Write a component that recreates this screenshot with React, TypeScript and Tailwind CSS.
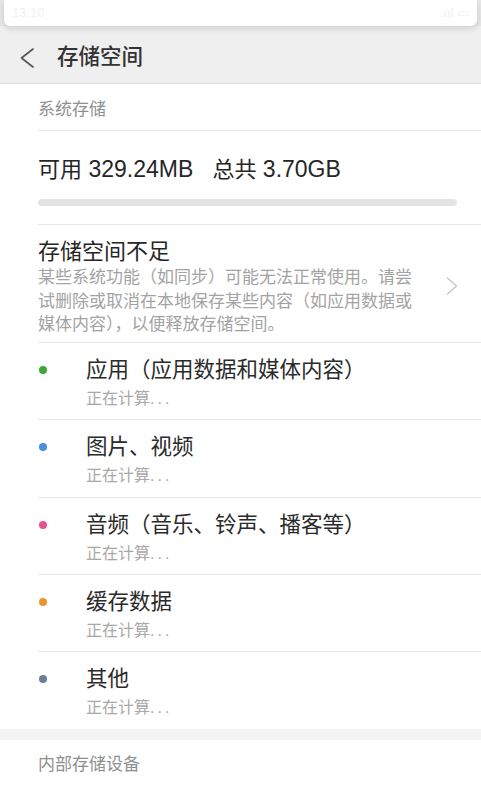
type Category = {
    name: string;
    color: string;
};

// 分类列表
const categories: Category[] = [
    { name: "应用（应用数据和媒体内容）", color: "bg-[#3aa935]" },
    { name: "图片、视频", color: "bg-[#4a8ee0]" },
    { name: "音频（音乐、铃声、播客等）", color: "bg-[#e4528f]" },
    { name: "缓存数据", color: "bg-[#f0932b]" },
    { name: "其他", color: "bg-[#6d7e98]" },
];

const font = {
    fontFamily: '"Liberation Sans", "Noto Sans CJK SC", sans-serif',
};

export default function App() {
    return (
        <div className="w-[481px] h-[785px] overflow-hidden bg-white" style={font}>
            {/* 顶部通知卡片 + 标题栏 */}
            <div className="bg-[#efefef] border-b border-[#dedede]">
                <div className="px-[4px] bg-[#e6e6e6]">
                    <div className="h-[26px] bg-white rounded-b-[6px] shadow-[0_3px_6px_rgba(0,0,0,0.12)] flex items-center justify-between px-[8px]">
                        <span className="text-[13px] text-[#f1f1f1]">13:10</span>
                        <span className="text-[13px] text-[#f1f1f1]">.ııl ▭</span>
                    </div>
                </div>
                <div className="h-[57px] flex items-center pt-[7px]">
                    <svg
                        className="ml-[20px]"
                        width="14"
                        height="20"
                        viewBox="0 0 14 20"
                        fill="none"
                    >
                        <polyline
                            points="13,1 1.5,10 13,19"
                            stroke="#555"
                            strokeWidth="1.6"
                            strokeLinejoin="round"
                            strokeLinecap="round"
                        />
                    </svg>
                    <h1 className="ml-[23px] text-[21.5px] leading-none text-[#333] font-medium">
                        存储空间
                    </h1>
                </div>
            </div>

            {/* 系统存储 */}
            <div className="h-[46px] flex items-center pt-[5px] pl-[38px] text-[17px] text-[#8f8f8f]">
                系统存储
            </div>

            <div className="ml-[38px] border-t border-[#e6e6e6] h-[94px]">
                <div className="pt-[23px] pr-[24px]">
                    <p className="leading-[30px] text-[#262626] whitespace-pre">
                        <span className="text-[22px]">可用</span>
                        <span className="text-[23px]"> 329.24MB   </span>
                        <span className="text-[22px]">总共</span>
                        <span className="text-[23px]"> 3.70GB</span>
                    </p>
                    <div className="mt-[12px] h-[7px] rounded-full bg-[#e4e4e4]"></div>
                </div>
            </div>

            {/* 存储空间不足 */}
            <div className="ml-[38px] border-t border-[#e6e6e6] flex h-[118px]">
                <div className="flex-1 pt-[13px]">
                    <p className="text-[22px] leading-[28px] text-[#262626]">存储空间不足</p>
                    <p className="text-[17px] leading-[23.5px] text-[#a3a3a3]">
                        <span className="block">某些系统功能（如同步）可能无法正常使用。请尝</span>
                        <span className="block">试删除或取消在本地保存某些内容（如应用数据或</span>
                        <span className="block">媒体内容），以便释放存储空间。</span>
                    </p>
                </div>
                <svg
                    className="mt-[52px] mr-[23px]"
                    width="12"
                    height="18"
                    viewBox="0 0 12 18"
                    fill="none"
                >
                    <polyline
                        points="1.5,1 10.5,9 1.5,17"
                        stroke="#c4c4c4"
                        strokeWidth="1.3"
                        strokeLinejoin="round"
                        strokeLinecap="round"
                    />
                </svg>
            </div>

            {/* 分类 */}
            {categories.map((c, index) => (
                <div
                    key={c.name}
                    className={
                        index === 1 || index === 4
                            ? "ml-[38px] border-t border-[#e6e6e6] h-[78px] flex"
                            : "ml-[38px] border-t border-[#e6e6e6] h-[77px] flex"
                    }
                >
                    <div className="w-[48px] pt-[23px]">
                        <div className={"ml-[1px] w-[8px] h-[8px] rounded-full " + c.color}></div>
                    </div>
                    <div className="pt-[13px]">
                        <p className="text-[21.5px] leading-[28px] text-[#2b2b2b]">{c.name}</p>
                        <p className="mt-[3px] text-[16px] leading-[24px] text-[#a8a8a8]">
                            正在计算<span className="tracking-[3px]">...</span>
                        </p>
                    </div>
                </div>
            ))}

            <div className="h-[11px] bg-[#f4f4f4]"></div>

            {/* 内部存储设备 */}
            <div className="h-[48px] flex items-center pt-[2px] pl-[38px] text-[17px] text-[#8f8f8f]">
                内部存储设备
            </div>
        </div>
    );
}
